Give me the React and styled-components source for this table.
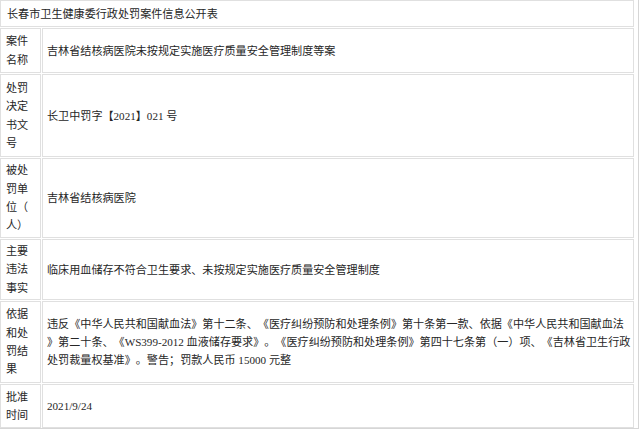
import React from 'react'
import styled, { createGlobalStyle } from 'styled-components'

const GlobalStyle = createGlobalStyle`
  html, body { margin:0; padding:0; background:#fff; }
  body {
    font-family:"Liberation Serif", "Noto Sans CJK SC", serif;
    font-size:11.1px;
    color:#262626;
    text-spacing-trim:space-all;
  }
`

const Page = styled.div`
  width:639px;
  height:429px;
  box-sizing:border-box;
  border-right:1px solid #d6d6d6;
  border-bottom:1px solid #d6d6d6;
`

const Table = styled.div`
  display:grid;
  width:634px;
  grid-template-columns:41px 592px;
  grid-template-rows:27px 45px 83px 80px 61px 82px 44px;
  gap:1px;
`

const Cell = styled.div`
  box-sizing:border-box;
  border:1px solid #e0e0e0;
  display:flex;
  flex-direction:column;
  justify-content:center;
  padding:0 ${p => (p.$label ? '5px' : '4px')};
  line-height:${p => (p.$label ? '18.3px' : '18px')};
  grid-column:${p => (p.$wide ? '1 / span 2' : 'auto')};
  white-space:nowrap;
`

const TitleCell = styled(Cell)`
  padding-left:6px;
`

const Line = styled.span`
  display:block;
`

const rows = [
  {
    label: ['案件', '名称'],
    text: ['吉林省结核病医院未按规定实施医疗质量安全管理制度等案'],
  },
  {
    label: ['处罚', '决定', '书文', '号'],
    text: ['长卫中罚字【2021】021 号'],
  },
  {
    label: ['被处', '罚单', '位（', '人）'],
    text: ['吉林省结核病医院'],
  },
  {
    label: ['主要', '违法', '事实'],
    text: ['临床用血储存不符合卫生要求、未按规定实施医疗质量安全管理制度'],
  },
  {
    label: ['依据', '和处', '罚结', '果'],
    text: [
      '违反《中华人民共和国献血法》第十二条、《医疗纠纷预防和处理条例》第十条第一款、依据《中华人民共和国献血法',
      '》第二十条、《WS399-2012 血液储存要求》。《医疗纠纷预防和处理条例》第四十七条第（一）项、《吉林省卫生行政',
      '处罚裁量权基准》。警告；罚款人民币 15000 元整',
    ],
  },
  {
    label: ['批准', '时间'],
    text: ['2021/9/24'],
  },
]

const App = () => {
  return (
    <>
      <GlobalStyle />
      <Page>
        <Table>
          <TitleCell $wide>长春市卫生健康委行政处罚案件信息公开表</TitleCell>
          {rows.map((row, i) => (
            <React.Fragment key={i}>
              <Cell $label>
                {row.label.map(l => <Line key={l}>{l}</Line>)}
              </Cell>
              <Cell>
                {row.text.map(t => <Line key={t}>{t}</Line>)}
              </Cell>
            </React.Fragment>
          ))}
        </Table>
      </Page>
    </>
  )
}

export default App
